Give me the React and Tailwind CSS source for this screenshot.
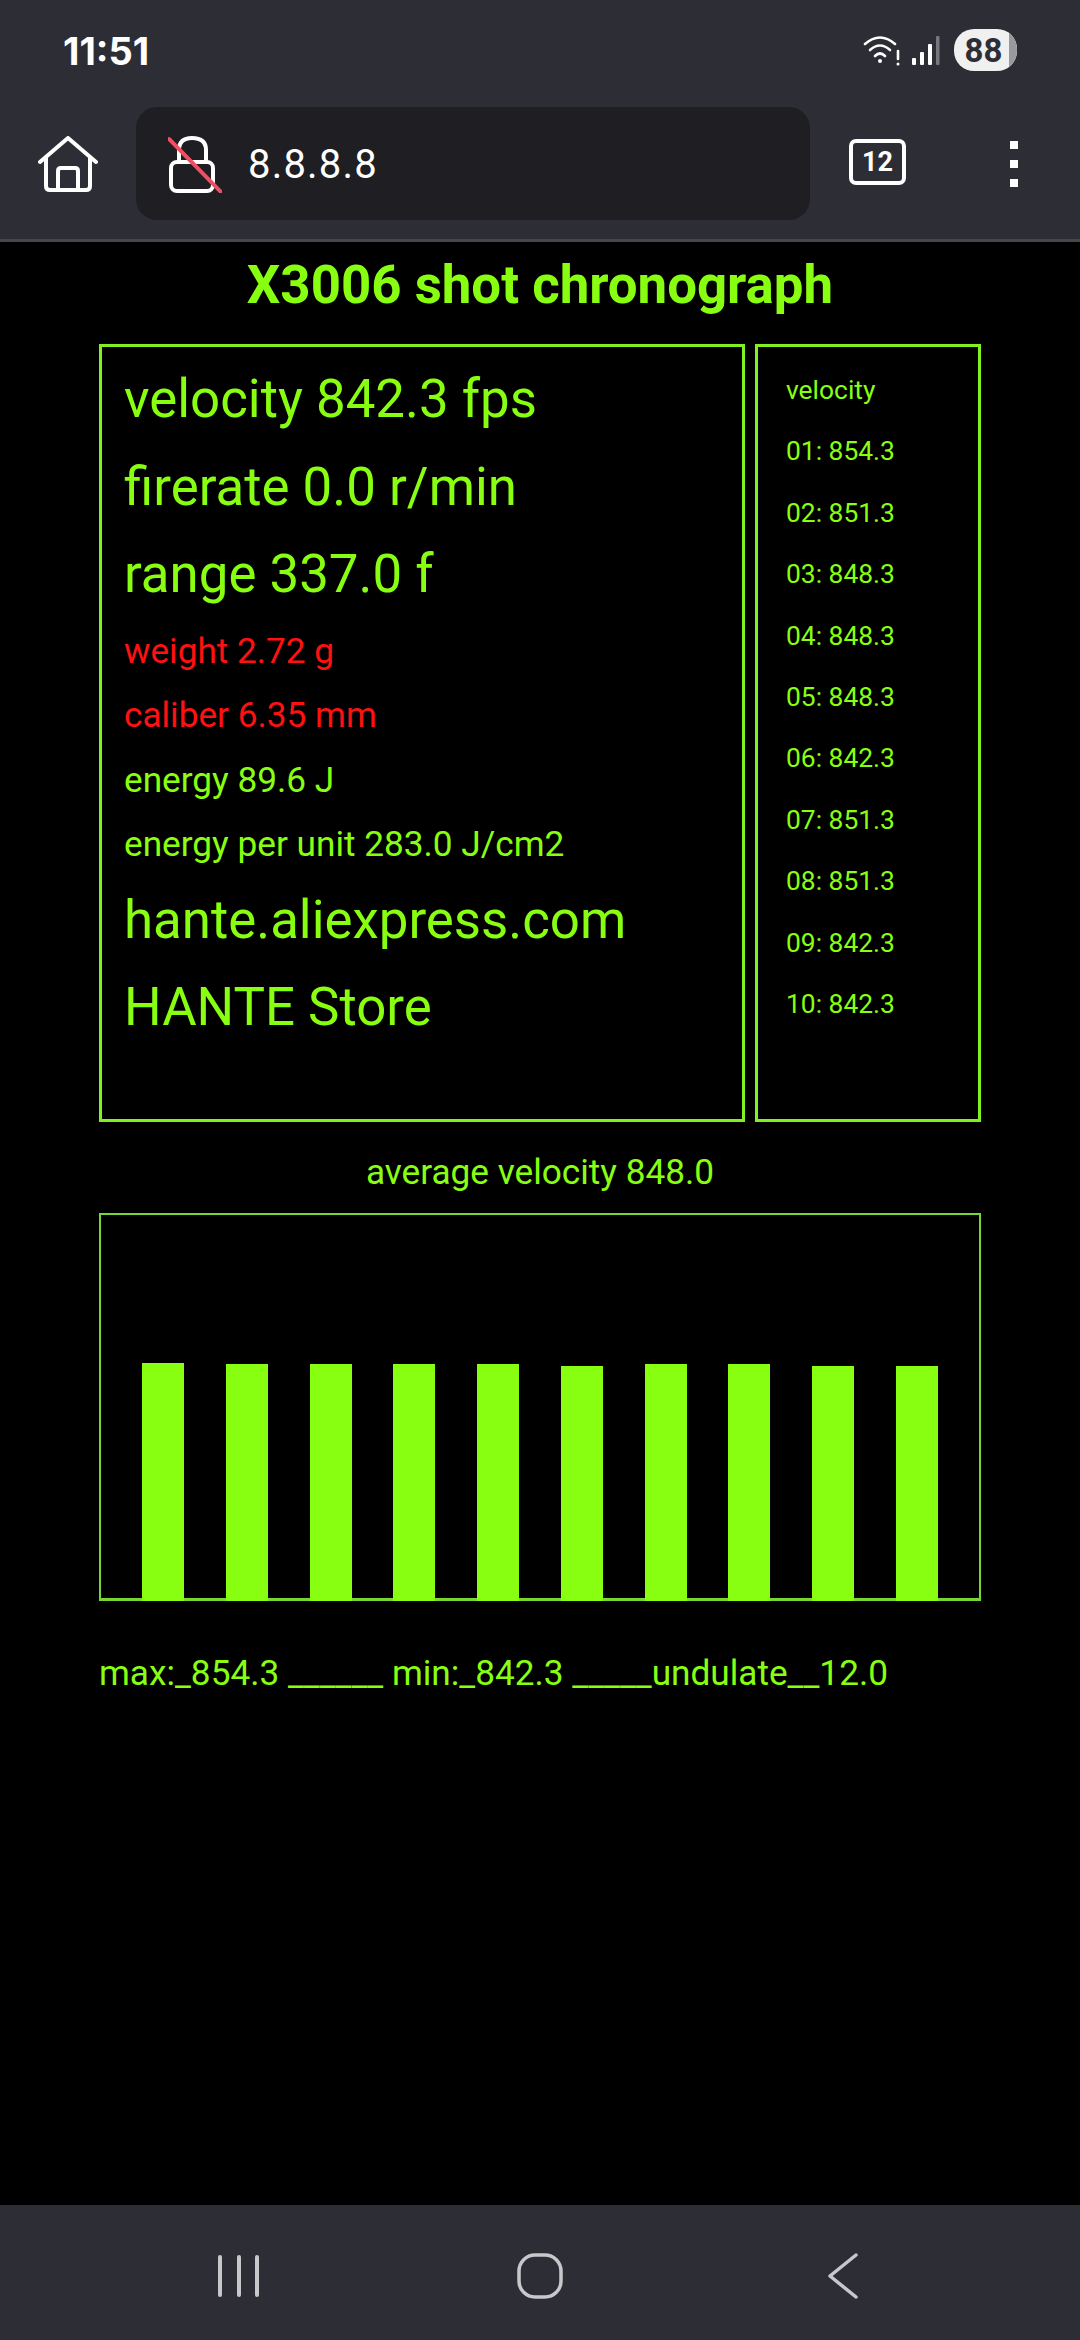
const green = 'text-[#88ff11]';

const stats = [
  { text: 'velocity 842.3 fps', big: true },
  { text: 'firerate 0.0 r/min', big: true },
  { text: 'range 337.0 f', big: true },
  { text: 'weight 2.72 g', red: true },
  { text: 'caliber 6.35 mm', red: true },
  { text: 'energy 89.6 J' },
  { text: 'energy per unit 283.0 J/cm2' },
  { text: 'hante.aliexpress.com', big: true },
  { text: 'HANTE Store', big: true },
];

const shots = ['01: 854.3', '02: 851.3', '03: 848.3', '04: 848.3', '05: 848.3', '06: 842.3', '07: 851.3', '08: 851.3', '09: 842.3', '10: 842.3'];

const bars = [238, 237, 237, 237, 237, 235, 237, 237, 235, 235];

const HomeIcon = () => (
  <svg width="60" height="56" viewBox="0 0 60 56" fill="none" stroke="white" strokeWidth="4" strokeLinejoin="round" strokeLinecap="round">
    <path d="M2 26 L30 2 L58 26" />
    <path d="M8 22 V50 Q8 54 12 54 H48 Q52 54 52 50 V22" />
    <path d="M20 54 V35 Q20 32 23 32 H37 Q40 32 40 35 V54" />
  </svg>
);

const LockIcon = () => (
  <svg width="54" height="58" viewBox="0 0 54 58" fill="none" strokeLinecap="round">
    <path d="M11 27 V15 Q11 3 24 3 Q38 3 38 15 V27" stroke="white" strokeWidth="4" />
    <rect x="3" y="27" width="42" height="29" rx="6" stroke="white" strokeWidth="4" fill="#1e1e23" />
    <path d="M1 4 L53 57" stroke="#ef4f63" strokeWidth="4" />
  </svg>
);

const WifiIcon = () => (
  <svg width="38" height="32" viewBox="0 0 38 32" fill="none" stroke="white" strokeWidth="2.6" strokeLinecap="round">
    <path d="M2 10 Q17 -3 32 10" />
    <path d="M7 16 Q17 7 27 16" />
    <path d="M12 22 Q17 17 22 22" />
    <circle cx="17" cy="27" r="2" fill="white" stroke="none" />
    <path d="M35 17 V25" />
    <circle cx="35" cy="30" r="1.5" fill="white" stroke="none" />
  </svg>
);

const SignalIcon = () => (
  <svg width="28" height="30" viewBox="0 0 28 30">
    <rect x="0" y="23" width="4" height="7" rx="1" fill="white" />
    <rect x="8" y="17" width="4" height="13" rx="1" fill="white" />
    <rect x="16" y="9" width="4" height="21" rx="1" fill="white" />
    <rect x="24" y="1" width="3.5" height="29" rx="1" fill="#77777c" />
  </svg>
);

const NavHome = () => (
  <svg width="46" height="46" viewBox="0 0 46 46" fill="none" stroke="#c8c8cb" strokeWidth="3.5">
    <rect x="2" y="2" width="42" height="42" rx="16" />
  </svg>
);

export default function App() {
  return (
    <div className="w-[1080px] h-[2340px] bg-black flex flex-col font-['Roboto',sans-serif] overflow-hidden">
      <header className="h-[242px] shrink-0 bg-[#2d2d35] border-b-[3px] border-[#46464e]">
        <div className="h-[107px] pl-[63px] pr-[63px] pt-[29px] flex items-start justify-between">
          <span className="text-[38px] leading-[44px] font-bold text-white font-['Inter',sans-serif]">11:51</span>
          <div className="flex items-center">
            <WifiIcon />
            <div className="ml-[11px]"><SignalIcon /></div>
            <div className="ml-[14px] relative w-[63px] h-[42px] rounded-[20px] bg-[#f0f0f0] overflow-hidden flex items-center justify-center">
              <span className="text-[33px] leading-none font-bold text-[#2d2d35] mr-[4px]">88</span>
              <div className="absolute right-0 top-0 bottom-0 w-[8px] bg-[#9a9a9e]" />
            </div>
          </div>
        </div>
        <div className="flex items-center h-[113px]">
          <div className="w-[136px] pl-[38px]"><HomeIcon /></div>
          <div className="w-[674px] h-[113px] rounded-[21px] bg-[#1e1e23] flex items-center pl-[32px]">
            <LockIcon />
            <span className="ml-[26px] mt-[3px] text-[40px] text-white tracking-[1.2px]">8.8.8.8</span>
          </div>
          <div className="ml-[39px] mt-[-3px] w-[57px] h-[46px] rounded-[7px] border-[4px] border-white flex items-center justify-center">
            <span className="text-[27px] leading-none font-bold text-white">12</span>
          </div>
          <div className="ml-[104px] flex flex-col gap-[11px]">
            <div className="w-[8px] h-[8px] bg-white" />
            <div className="w-[8px] h-[8px] bg-white" />
            <div className="w-[8px] h-[8px] bg-white" />
          </div>
        </div>
      </header>

      <main className="flex-1 flex flex-col">
        <h1 className={`text-center text-[52.8px] leading-[56px] font-bold ${green} mt-[15px]`}>X3006 shot chronograph</h1>

        <div className="flex gap-[10px] ml-[99px] mt-[31px]">
          <div className="w-[646px] h-[778px] border-[3px] border-[#80f020] pl-[22px] pt-[9px]">
            {stats.map((s) => (
              <div
                key={s.text}
                className={s.big
                  ? `h-[87.5px] text-[52.8px] leading-[87.5px] ${green}`
                  : `h-[64.5px] text-[35.2px] leading-[64.5px] ${s.red ? 'text-[#ff1111]' : green}`}
              >
                {s.text}
              </div>
            ))}
          </div>
          <div className="w-[226px] h-[778px] border-[3px] border-[#80f020] pl-[28px] pt-[13px]">
            <div className={`h-[61.4px] text-[26.4px] leading-[61.4px] ${green}`}>velocity</div>
            {shots.map((s) => (
              <div key={s} className={`h-[61.4px] text-[26.4px] leading-[61.4px] ${green}`}>{s}</div>
            ))}
          </div>
        </div>

        <p className={`text-center text-[35.2px] leading-[40px] ${green} mt-[30px]`}>average velocity 848.0</p>

        <div className="ml-[99px] mt-[21px] w-[882px] h-[388px] border-2 border-b-[3px] border-[#76d632] flex items-end pl-[41px] gap-[41.75px]">
          {bars.map((h, i) => (
            <div key={i} className="w-[42px] bg-[#88ff11] -mb-[3px]" style={{ height: h }} />
          ))}
        </div>

        <p className={`ml-[99px] mt-[52px] text-[35.2px] leading-[40px] ${green} whitespace-pre`}>max:_854.3 ______ min:_842.3 _____undulate__12.0</p>
      </main>

      <nav className="h-[135px] shrink-0 bg-[#2d2d35] flex items-center">
        <div className="ml-[218px] mt-[6px] flex gap-[14.5px]">
          <div className="w-[4px] h-[42px] rounded-full bg-[#c8c8cb]" />
          <div className="w-[4px] h-[42px] rounded-full bg-[#c8c8cb]" />
          <div className="w-[4px] h-[42px] rounded-full bg-[#c8c8cb]" />
        </div>
        <div className="ml-[258px] mt-[6px]"><NavHome /></div>
        <div className="ml-[264px] mt-[6px]">
          <svg width="32" height="46" viewBox="0 0 32 46" fill="none" stroke="#c8c8cb" strokeWidth="3.5" strokeLinecap="round" strokeLinejoin="round">
            <path d="M29 2 L3 23 L29 44" />
          </svg>
        </div>
      </nav>
    </div>
  );
}
